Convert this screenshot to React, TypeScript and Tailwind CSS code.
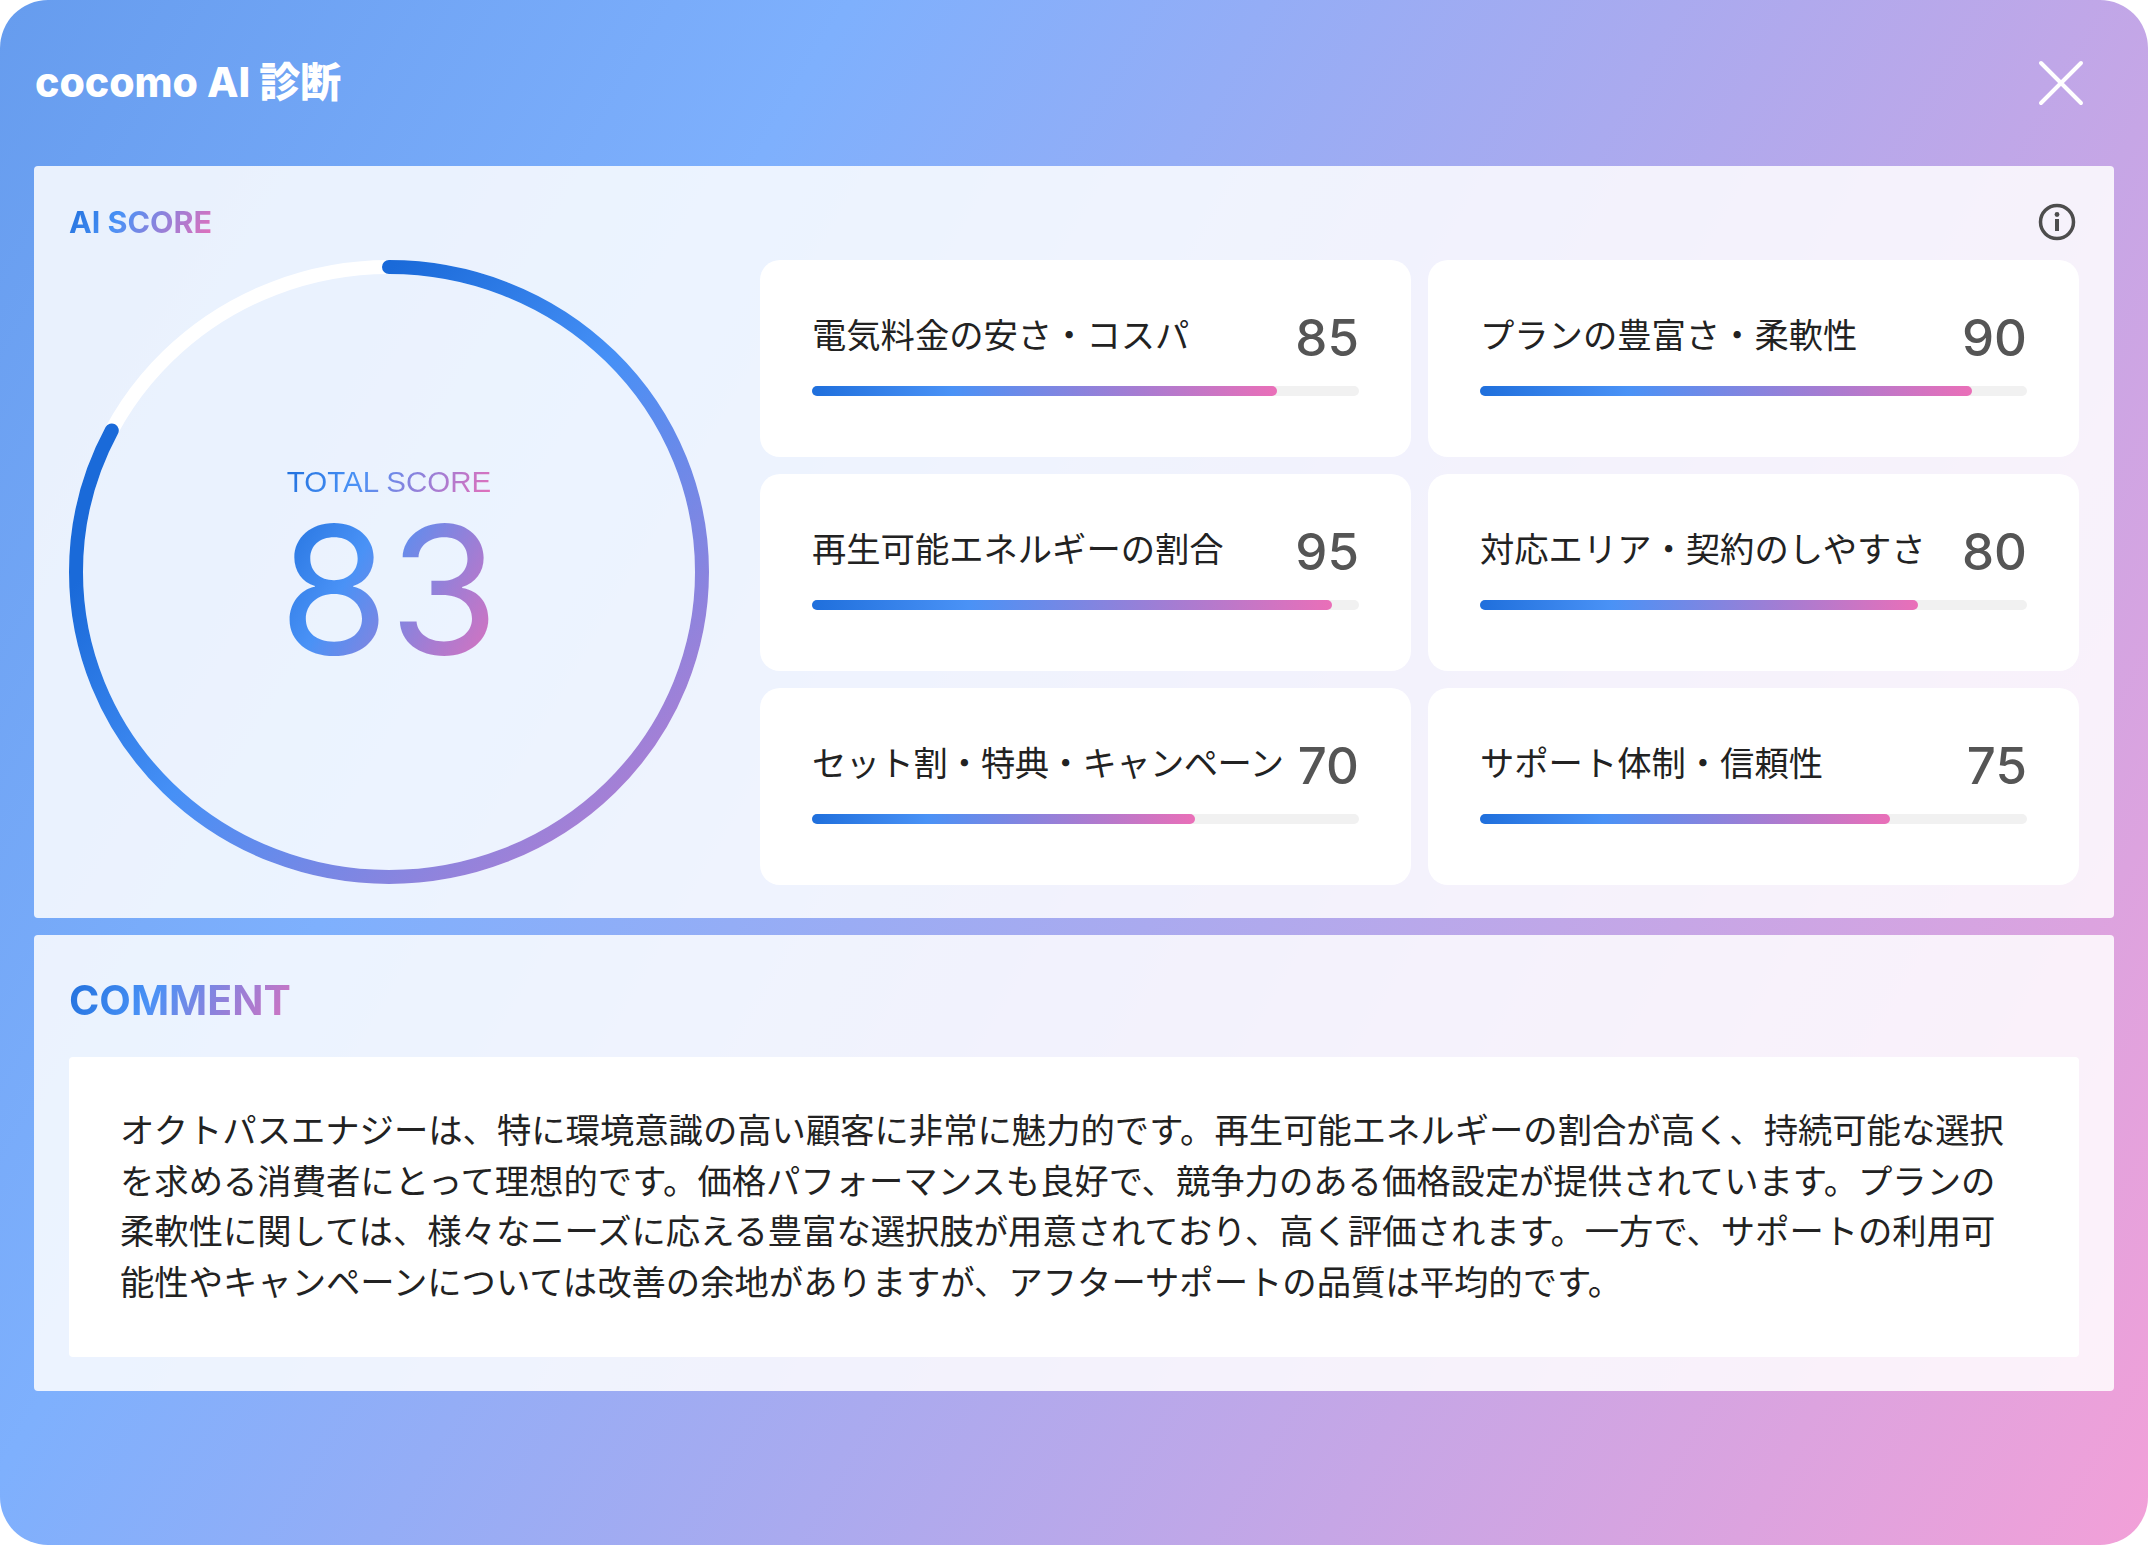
const sans = 'font-["Inter","Noto_Sans_CJK_JP",sans-serif]';

const scores = [
  { label: '電気料金の安さ・コスパ', value: 85 },
  { label: 'プランの豊富さ・柔軟性', value: 90 },
  { label: '再生可能エネルギーの割合', value: 95 },
  { label: '対応エリア・契約のしやすさ', value: 80 },
  { label: 'セット割・特典・キャンペーン', value: 70, tight: true },
  { label: 'サポート体制・信頼性', value: 75 },
];

const gradientText =
  'bg-[linear-gradient(120deg,#1f6fdc_0%,#4a92f6_35%,#a67cd2_72%,#e66fb9_100%)] bg-clip-text text-transparent';

function ScoreRing() {
  const ring = 'M320 7 A313 305 0 1 1 320 617 A313 305 0 1 1 320 7';
  return (
    <div className="relative h-[624px] w-[640px] shrink-0">
      <svg width="640" height="624" viewBox="0 0 640 624" fill="none">
        <defs>
          <linearGradient id="ring" gradientUnits="userSpaceOnUse" x1="165" y1="165" x2="550" y2="550">
            <stop offset="0" stopColor="#1a6ad9" />
            <stop offset="0.4" stopColor="#4690f6" />
            <stop offset="1" stopColor="#a97fd4" />
          </linearGradient>
        </defs>
        <path d={ring} stroke="#ffffff" strokeWidth="14" />
        <path d={ring} pathLength={100} stroke="url(#ring)" strokeWidth="14" strokeLinecap="round" strokeDasharray="82.6 100" />
      </svg>
      <div className="absolute inset-0 flex flex-col items-center justify-center">
        <div className={`font-["Liberation_Sans",sans-serif] text-[29.5px] leading-[36px] ${gradientText}`}>TOTAL SCORE</div>
        <div className={`font-["Inter",sans-serif] text-[178px] leading-[180px] font-normal ${gradientText}`}>83</div>
      </div>
    </div>
  );
}

function ScoreCard({ label, value, tight }: { label: string; value: number; tight?: boolean }) {
  return (
    <div className="h-[197px] rounded-[20px] bg-white px-[52px] pt-[52px]">
      <div className="flex h-[50px] items-center justify-between whitespace-nowrap">
        <span className={tight ? 'mt-[-2px] text-[34.3px] tracking-[-0.5px] text-[#222222]' : 'mt-[-2px] text-[34.3px] text-[#222222]'}>{label}</span>
        <span className={'font-["Inter",sans-serif] text-[51px] font-[450] leading-none text-[#555555]'}>{value}</span>
      </div>
      <div className="mt-[24px] h-[10px] rounded-full bg-[#f1f1f1]">
        <div
          className="h-full rounded-full bg-[linear-gradient(90deg,#1f6fdc_0%,#4a92f6_30%,#a67cd2_70%,#ea6fb8_100%)]"
          style={{ width: `${value}%` }}
        />
      </div>
    </div>
  );
}

export default function App() {
  return (
    <div className={`${sans} flex h-[1545px] w-full flex-col rounded-[48px] bg-[linear-gradient(120deg,#669cee_0%,#7eb0fd_28%,#f2a0d8_100%)]`}>
      <header className="flex h-[166px] shrink-0 items-center justify-between pl-[35px] pr-[64px]">
        <h1 className="text-[41px] font-extrabold text-white">cocomo AI 診断</h1>
        <svg width="46" height="46" viewBox="0 0 46 46" fill="none" stroke="#ffffff" strokeWidth="4" strokeLinecap="round">
          <path d="M3 3 L43 43 M43 3 L3 43" />
        </svg>
      </header>

      <section className="mx-[34px] rounded-[4px] bg-white/85 px-[35px] pb-[33px] pt-[38px]">
        <div className="flex h-[56px] items-start justify-between">
          <h2 className={`text-[30.5px] font-bold leading-[36px] ${gradientText}`}>AI SCORE</h2>
          <svg className="mr-[3px] mt-[-1px]" width="38" height="38" viewBox="0 0 38 38" fill="none">
            <circle cx="19" cy="19" r="16.5" stroke="#4d4d4d" strokeWidth="3.5" />
            <rect x="17" y="16" width="4" height="12" fill="#4d4d4d" />
            <circle cx="19" cy="11.5" r="2.4" fill="#4d4d4d" />
          </svg>
        </div>
        <div className="flex items-start justify-between">
          <ScoreRing />
          <div className="grid w-[1319px] grid-cols-2 gap-[17px]">
            {scores.map((s) => (
              <ScoreCard key={s.label} label={s.label} value={s.value} tight={s.tight} />
            ))}
          </div>
        </div>
      </section>

      <section className="mx-[34px] mt-[17px] rounded-[4px] bg-white/85 px-[35px] pb-[34px] pt-[40px]">
        <h2 className={`h-[82px] w-fit text-[41px] font-bold leading-[50px] ${gradientText}`}>COMMENT</h2>
        <div className="rounded-[4px] bg-white py-[49px] pl-[51px] pr-[52px] text-[34.35px] leading-[50.5px] text-[#222222]">
          オクトパスエナジーは、特に環境意識の高い顧客に非常に魅力的です。再生可能エネルギーの割合が高く、持続可能な選択を求める消費者にとって理想的です。価格パフォーマンスも良好で、競争力のある価格設定が提供されています。プランの柔軟性に関しては、様々なニーズに応える豊富な選択肢が用意されており、高く評価されます。一方で、サポートの利用可能性やキャンペーンについては改善の余地がありますが、アフターサポートの品質は平均的です。
        </div>
      </section>
    </div>
  );
}
